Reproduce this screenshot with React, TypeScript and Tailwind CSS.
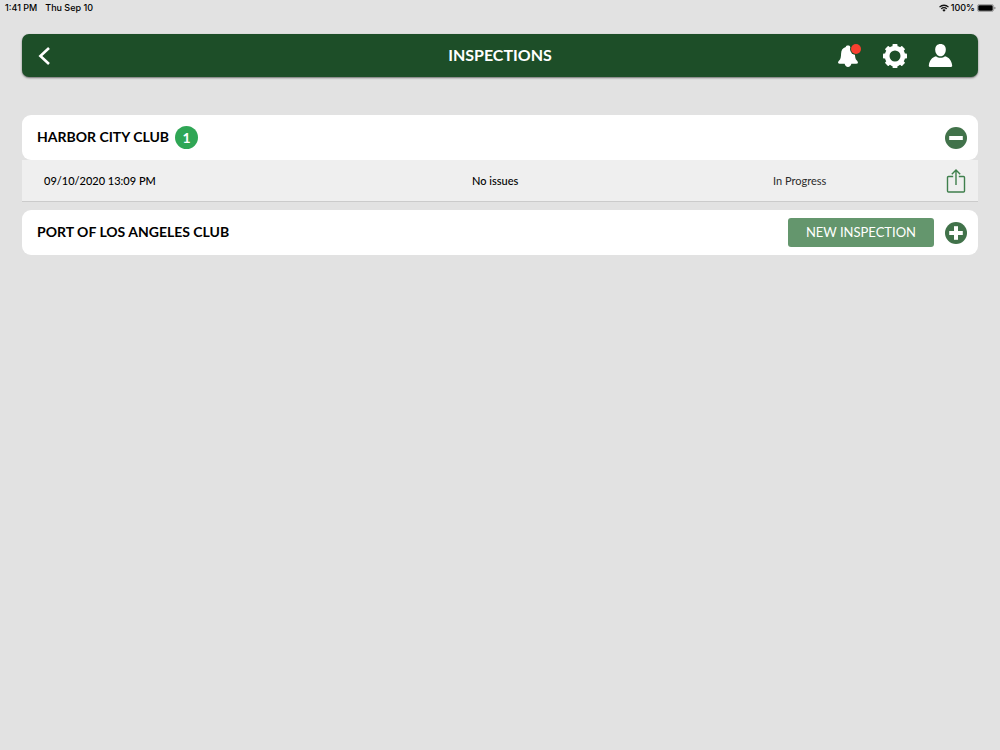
import { useState } from "react";

const TOOTH_ANGLES = [0, 45, 90, 135, 180, 225, 270, 315];

function WifiIcon() {
  return (
    <svg className="h-2 w-[10px]" viewBox="0 0 20 16" fill="none" stroke="#111" strokeWidth="2.6" aria-hidden="true">
      <path d="M1 6.2a12.8 12.8 0 0 1 18 0" />
      <path d="M4.4 9.8a8 8 0 0 1 11.2 0" />
      <path d="M10 15.6 6.6 12.2a4.8 4.8 0 0 1 6.8 0z" fill="#111" stroke="none" />
    </svg>
  );
}

function BatteryIcon() {
  return (
    <svg className="h-2 w-[19px]" viewBox="0 0 19 8" aria-hidden="true">
      <rect x="0.4" y="0.4" width="16.2" height="7.2" rx="2.2" fill="none" stroke="#8a8a8a" strokeWidth="0.8" />
      <rect x="1.3" y="1.2" width="14.4" height="5.6" rx="1.3" fill="#000" />
      <path d="M17.4 2.7c.8.2 1.1.7 1.1 1.3s-.3 1.1-1.1 1.3z" fill="#777" />
    </svg>
  );
}

function BellIcon() {
  return (
    <svg className="h-6 w-[26px]" viewBox="0 0 26 24" aria-hidden="true">
      <path
        d="M12 1.600c-1.200 0-2 .5-2.200 1.300C6.700 3.700 5.200 6.200 5.100 9.400c-.1 3.500-.5 5.600-1.700 6.900-.7.800-1.500 1.500-1.300 2.500.1.600.7.900 1.400.9h5.100c.4 1.800 1.700 3.200 3.400 3.200s3-1.400 3.400-3.200h5.100c.7 0 1.300-.3 1.400-.9.200-1-.6-1.700-1.300-2.500-1.200-1.300-1.600-3.400-1.700-6.900-.1-3.200-1.600-5.700-4.700-6.500-.2-.8-1-1.300-2.200-1.300z"
        fill="#fff"
      />
      <circle cx="20" cy="5" r="6" fill="#1d4e28" />
      <circle cx="20" cy="5" r="5" fill="#f7402f" />
    </svg>
  );
}

function GearIcon() {
  return (
    <svg className="size-6" viewBox="0 0 24 24" aria-hidden="true">
      <circle cx="12" cy="12" r="7.9" fill="none" stroke="#fff" strokeWidth="4.800" />
      {TOOTH_ANGLES.map((angle) => (
        <rect key={angle} x="9.5" y="0" width="5" height="5" rx="0.8" fill="#fff" transform={`rotate(${angle} 12 12)`} />
      ))}
    </svg>
  );
}

function UserIcon() {
  return (
    <svg className="h-6 w-[25px]" viewBox="0 0 25 24" fill="#fff" aria-hidden="true">
      <path d="M12.5 0c3.2 0 5.300 2.200 5.300 5.500 0 3.800-2.200 6.800-5.300 6.800S7.200 9.300 7.200 5.500C7.200 2.200 9.300 0 12.500 0z" />
      <path d="M8 12.300c1.300 1 2.800 1.500 4.500 1.500s3.200-.5 4.500-1.500c4 1.100 6.700 4.200 7.200 9.400 0 .7-.4 1.200-1.100 1.200H1.900c-.7 0-1.100-.5-1.100-1.200.5-5.200 3.200-8.300 7.200-9.400z" />
    </svg>
  );
}

function ShareIcon() {
  return (
    <svg className="h-6 w-5" viewBox="0 0 20 24" fill="none" stroke="#3f7f4c" strokeWidth="1.400" aria-hidden="true">
      <path d="M7.200 7.500H2.500a1 1 0 0 0-1 1v13.500a1 1 0 0 0 1 1h15a1 1 0 0 0 1-1V8.500a1 1 0 0 0-1-1h-4.700" />
      <path d="M10 16V1.200M5.800 5.200 10 1l4.200 4.200" />
    </svg>
  );
}

function ToggleIcon({ open }: { open: boolean }) {
  return (
    <svg className="size-[22px]" viewBox="0 0 22 22" aria-hidden="true">
      <circle cx="11" cy="11" r="11" fill="#41724a" />
      <rect x="4.200" y="9" width="13.600" height="4" fill="#fff" />
      {!open && <rect x="9" y="4.200" width="4" height="13.600" fill="#fff" />}
    </svg>
  );
}

type Inspection = { date: string; result: string; status: string };

function ClubSection({ name, inspections, initiallyOpen }: { name: string; inspections: Inspection[]; initiallyOpen: boolean }) {
  const [open, setOpen] = useState(initiallyOpen);
  return (
    <section>
      <div className="flex h-[45px] items-center rounded-[9px] bg-white pr-[11px] pl-[15px]">
        <h2 className="pb-0.5 text-sm leading-5 font-bold">{name}</h2>
        {inspections.length > 0 && (
          <span className="ml-1.5 flex size-[23px] items-center justify-center rounded-full bg-[#2fa655] text-sm leading-5 font-bold text-white">
            {inspections.length}
          </span>
        )}
        <div className="ml-auto flex items-center gap-[11px]">
          {inspections.length === 0 && (
            <button type="button" className="h-[29px] rounded-[3px] bg-[#64966d] px-[18px] pb-0.5 text-[13px] leading-5 text-white">
              NEW INSPECTION
            </button>
          )}
          <button type="button" aria-label={open ? "Collapse" : "Expand"} aria-expanded={open} onClick={() => setOpen(!open)}>
            <ToggleIcon open={open} />
          </button>
        </div>
      </div>
      {open && (
        <ul>
          {inspections.map((item) => (
            <li
              key={item.date}
              className="grid h-[42px] grid-cols-[428fr_301fr_173fr_20px] items-center border-b border-[#cbcbcb] bg-[#efefef] pr-3 pl-[22px] text-[11px] leading-4"
            >
              <span className="font-medium">{item.date}</span>
              <span className="font-medium">{item.result}</span>
              <span className="text-[#2b2b2b]">{item.status}</span>
              <button type="button" aria-label="Share">
                <ShareIcon />
              </button>
            </li>
          ))}
        </ul>
      )}
    </section>
  );
}

export default function App() {
  return (
    <div className="min-h-screen bg-[#e2e2e2] font-['Lato','Liberation_Sans',sans-serif] text-black">
      <div className="flex h-[15px] items-center justify-between pr-1 pl-[5px] font-['Inter','Liberation_Sans',sans-serif] text-[9px] leading-3 font-medium">
        <div className="flex gap-2">
          <span>1:41 PM</span>
          <span>Thu Sep 10</span>
        </div>
        <div className="flex items-center gap-[2px]">
          <WifiIcon />
          <span>100%</span>
          <BatteryIcon />
        </div>
      </div>

      <div className="px-[22px] pt-[19px]">
        <header className="grid h-[43px] grid-cols-[1fr_auto_1fr] items-center rounded-[7px] bg-[#1d4e28] px-4 text-white shadow-[0_1px_2px_rgba(0,0,0,0.5)]">
          <button type="button" aria-label="Back" className="justify-self-start">
            <svg className="h-[18px] w-3" viewBox="0 0 12 18" fill="none" stroke="#fff" strokeWidth="2.600" aria-hidden="true">
              <path d="M11 1 2.400 9l8.600 8" />
            </svg>
          </button>
          <h1 className="pb-0.5 text-base leading-5 font-bold">INSPECTIONS</h1>
          <div className="flex gap-[21px] justify-self-end pr-[9px]">
            <button type="button" aria-label="Notifications"><BellIcon /></button>
            <button type="button" aria-label="Settings"><GearIcon /></button>
            <button type="button" aria-label="Profile"><UserIcon /></button>
          </div>
        </header>

        <main className="mt-[38px] flex flex-col gap-2">
          <ClubSection
            name="HARBOR CITY CLUB"
            initiallyOpen
            inspections={[{ date: "09/10/2020 13:09 PM", result: "No issues", status: "In Progress" }]}
          />
          <ClubSection name="PORT OF LOS ANGELES CLUB" initiallyOpen={false} inspections={[]} />
        </main>
      </div>
    </div>
  );
}
